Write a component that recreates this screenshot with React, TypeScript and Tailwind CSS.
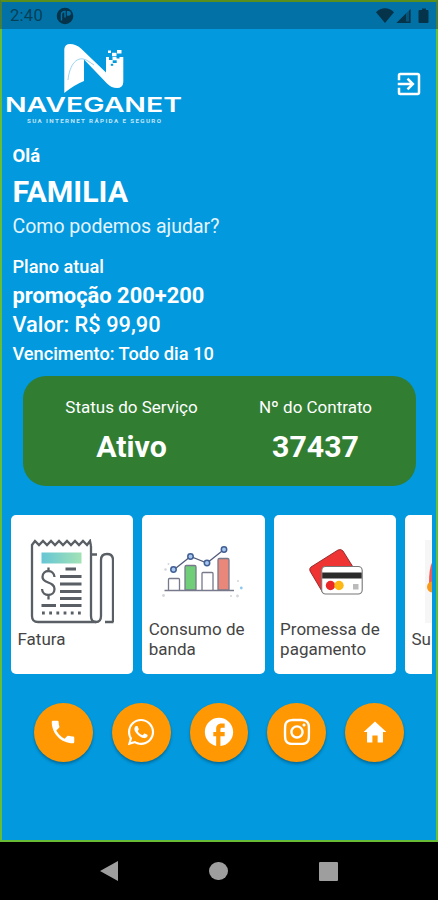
import React from 'react';
import { MdExitToApp, MdFacebook } from 'react-icons/md';
import { IoMdCall, IoMdHome } from 'react-icons/io';
import { FaWhatsapp, FaInstagram } from 'react-icons/fa';

const StatusBar: React.FC = () => (
  <div className="h-[29px] shrink-0 bg-[#0272a6] border-t-2 border-x-2 border-t-[#5a8f1e] border-x-[#467f3c] flex items-center justify-between pl-2 pr-[6px] text-[#044058]">
    <div className="flex items-center gap-[13px]">
      <span className="text-[16.5px] leading-[27px] tracking-[0.3px]">2:40</span>
      <svg width="18" height="18" viewBox="0 0 18 18">
        <circle cx="9" cy="9" r="8.3" fill="#04334a" />
        <path d="M5.5 13.500V7.5Q5.5 4.5 9 4.5V10.5" fill="none" stroke="#0272a6" strokeWidth="1.4" />
        <path d="M11 4h1.500a2.400 2.400 0 0 1 0 4.800H11Z" fill="#0272a6" />
      </svg>
    </div>
    <svg width="54" height="18" viewBox="0 0 54 18" fill="#04334a">
      <path d="M0 5.2C5-.2 13-.2 18 5.2L9 16Z" />
      <path d="M20.5 16 34.5 2V16Z" opacity="0.45" />
      <path d="M20.5 16 30 6.5V16Z" />
      <path d="M33 4 34.5 2V16H30V14.5H33Z" />
      <path d="M43.5 3h2.5V1.5h4V3h1.5q1 0 1 1V15q0 1-1 1h-8q-1 0-1-1V4q0-1 1-1Z" />
    </svg>
  </div>
);

const Logo: React.FC = () => (
  <svg width="180" height="86" viewBox="4 40 180 86" fill="#fff">
    <path d="M64.3 93V49Q65 44 70 44Q76 44 81 48.5L106 72.500V57H123.300V82Q123 88 117 88Q111.500 88 107 83.500L84 59.500V81Q74 85 64.300 93Z" />
    <path d="M68 80C69.500 65 77 54 88 61L94 65" fill="none" stroke="#8ccdf0" strokeWidth="0.9" />
    <rect x="108" y="50.500" width="3" height="2.500" />
    <rect x="112" y="52.800" width="4.500" height="3.500" />
    <rect x="117" y="50" width="4.500" height="3.500" />
    <rect x="109" y="57" width="3.500" height="3" fill="#0299de" />
    <rect x="116.500" y="56.500" width="3" height="2" fill="#0299de" />
    <rect x="112.700" y="60.300" width="4" height="2.700" fill="#0299de" />
    <rect x="110.800" y="63.800" width="2.400" height="2" fill="#0299de" />
    <text x="5" y="112" fontSize="20.5" fontWeight="600" textLength="177" lengthAdjust="spacingAndGlyphs" className="font-[Inter,sans-serif]">
      NAVEGANET
    </text>
    <text x="27" y="123" fontSize="6.2" fontWeight="700" textLength="134" lengthAdjust="spacing" fill="#c5e6f7">
      SUA INTERNET RÁPIDA E SEGURO
    </text>
  </svg>
);

const InvoiceIcon: React.FC = () => (
  <svg width="84" height="86" viewBox="30 539 84 86" fill="none" stroke="#595f64" strokeWidth="2.3">
    <path d="M91 546V616Q91 622 96 622Q101 622 101 616V560Q101 554 107 554Q113 554 113 560V622M105 622H113.5M92 554.5H97" />
    <path d="M96 622H38Q32 622 32 616V545L35 541L39 545L43 541L47 545L51 541L55 545L59 541L63 545L67 541L71 545L75 541L79 545L83 541L87 545L90 541L91 546" />
    <defs>
      <linearGradient id="invoiceBand">
        <stop offset="0" stopColor="#65c6d4" />
        <stop offset="1" stopColor="#a3e2b5" />
      </linearGradient>
    </defs>
    <rect x="41.5" y="552.5" width="40" height="11" fill="url(#invoiceBand)" stroke="none" />
    <path d="M54.5 577C54 569 42.5 569 42.5 577C42.5 584 54.5 581 54.5 589C54.5 597 42.5 597 42 589M48.5 567.5V571M48.5 595V599.5" />
    <path d="M65.5 569H76M60 576.5H81.5M60 584H81.5M60 591.5H81.5M60 598.5H81.5M60 605.5H81.5M41.5 605.5H56" strokeWidth="2.8" />
    <path d="M42 613H82" strokeWidth="2.8" strokeDasharray="2.8 4.4" />
  </svg>
);

const UsageIcon: React.FC = () => (
  <svg width="82" height="56" viewBox="163 543 82 56" fill="none" stroke="#77798c" strokeWidth="1.3">
    <path d="M165.5 590.5H235" />
    <path d="M169.5 590V579.5q0-1 1-1h9q1 0 1 1V590" />
    <path d="M186 590V567q0-1.5 1.5-1.5h8q1.5 0 1.5 1.5V590Z" fill="#70cd78" />
    <path d="M203 590V573.5q0-1 1-1h9q1 0 1 1V590" />
    <path d="M219 590V560q0-1.5 1.5-1.5h8q1.5 0 1.5 1.5V590Z" fill="#e9887a" />
    <path d="M174.5 570 191.5 556.5 208 563 225 549.5" stroke="#535b79" />
    <g fill="#a6c5ef" stroke="#405e94" strokeWidth="1.5">
      <circle cx="174.5" cy="569.5" r="2.7" />
      <circle cx="191.5" cy="556.5" r="2.7" />
      <circle cx="208" cy="563" r="2.7" />
      <circle cx="225" cy="549.5" r="2.7" />
    </g>
    <g stroke="none" fill="#d3d5da">
      <circle cx="166.5" cy="569.5" r="1.3" />
      <circle cx="169.5" cy="564" r="1" />
      <circle cx="164.5" cy="595.5" r="1.4" />
      <circle cx="232" cy="596" r="1" />
      <circle cx="238.5" cy="596" r="1.4" />
      <circle cx="239" cy="581" r="1" />
      <circle cx="242.3" cy="588" r="1.4" fill="#8dc8ef" />
    </g>
  </svg>
);

const CardsIcon: React.FC = () => (
  <svg width="56" height="48" viewBox="307 548 56 48">
    <path d="M310 567 337 550Q340 548.5 342 551L352 567V577L322 593L309 571Q308 568.5 310 567Z" fill="#ef3434" stroke="#8c2527" strokeWidth="0.9" />
    <rect x="320.7" y="566.5" width="40.5" height="27.5" rx="4" fill="#fff" stroke="#777" strokeWidth="1.1" />
    <rect x="321.2" y="572.5" width="39.5" height="6" fill="#2b2b2b" />
    <circle cx="329.5" cy="585.5" r="4.7" fill="#eb2727" />
    <circle cx="338" cy="585.5" r="4.7" fill="#fdb813" />
    <rect x="352" y="584" width="5.5" height="5.5" fill="#bbb" />
  </svg>
);

const SupportIcon: React.FC = () => (
  <svg width="40" height="86" viewBox="425 539 40 86">
    <rect x="425" y="540" width="40" height="83" fill="#f6f6f6" />
    <path d="M433 561Q429 566 429 584H440V556Z" fill="#ef5b5b" />
    <circle cx="432.5" cy="587" r="5.5" fill="#f79a1c" />
  </svg>
);

const services = [
  { label: 'Fatura', icon: <InvoiceIcon />, box: 'pt-6 pl-[19px] h-[115px]' },
  { label: 'Consumo de banda', icon: <UsageIcon />, box: 'pt-7 pl-[20px] h-[105px]' },
  { label: 'Promessa de pagamento', icon: <CardsIcon />, box: 'pt-[33px] pl-[34px] h-[105px]' },
  { label: 'Su', icon: <SupportIcon />, box: 'pt-6 pl-[20px] h-[115px]' },
];

const contacts = [
  { name: 'Telefone', icon: <IoMdCall size={30} /> },
  { name: 'WhatsApp', icon: <FaWhatsapp size={30} /> },
  { name: 'Facebook', icon: <MdFacebook size={34} /> },
  { name: 'Instagram', icon: <FaInstagram size={30} /> },
  { name: 'Início', icon: <IoMdHome size={28} /> },
];

const App: React.FC = () => {
  return (
    <div className="w-[438px] h-[900px] bg-black flex flex-col overflow-hidden font-[Roboto,sans-serif] text-white">
      <StatusBar />

      <main className="h-[813px] shrink-0 bg-[#0299de] border-x-2 border-b-2 border-[#67bd36] flex flex-col">
        <header className="h-[115px] shrink-0 flex items-start justify-between pl-[2px] pr-[12px] pt-[11px]">
          <Logo />
          <button className="mt-[29px]" aria-label="Sair">
            <MdExitToApp size={30} />
          </button>
        </header>

        <section className="pl-[10.5px] h-[232px] shrink-0">
          <p className="text-[18.5px] leading-[24px] font-bold">Olá</p>
          <h1 className="text-[30.3px] leading-[47px] font-bold">FAMILIA</h1>
          <p className="text-[19.5px] leading-[24px] text-[#e4f4fd]">Como podemos ajudar?</p>
          <p className="mt-[16px] text-[18.2px] leading-[24px] font-medium">Plano atual</p>
          <p className="mt-[3px] text-[21.9px] leading-[28px] font-bold">promoção 200+200</p>
          <p className="mt-[1px] text-[21.8px] leading-[28px] font-medium">Valor: R$ 99,90</p>
          <p className="mt-[3px] text-[18.2px] leading-[24px] font-medium">Vencimento: Todo dia 10</p>
        </section>

        <section className="ml-[20.5px] w-[393.5px] h-[110px] shrink-0 rounded-[23px] bg-[#317d32] grid grid-cols-[218px_150px] pt-[19px] text-center">
          <div>
            <p className="text-[17px] leading-[24px]">Status do Serviço</p>
            <p className="mt-[8px] text-[30.3px] leading-[40px] font-bold">Ativo</p>
          </div>
          <div>
            <p className="text-[17px] leading-[24px]">Nº do Contrato</p>
            <p className="mt-[8px] text-[30.3px] leading-[40px] font-bold">37437</p>
          </div>
        </section>

        <section className="mt-[29px] ml-[9px] mr-[4px] flex gap-[9px] overflow-hidden shrink-0">
          {services.map((s) => (
            <div key={s.label} className="w-[122.3px] h-[159px] shrink-0 rounded-[5px] bg-white text-[#444]">
              <div className={s.box}>{s.icon}</div>
              <p className="pl-[6.5px] text-[17px] leading-[19.5px]">{s.label}</p>
            </div>
          ))}
        </section>

        <nav className="mt-[29px] ml-[32px] flex gap-[19px]">
          {contacts.map((c) => (
            <button
              key={c.name}
              aria-label={c.name}
              className="w-[58.8px] h-[58.8px] rounded-full bg-[#ff9803] flex items-center justify-center shadow-[0_2px_3px_rgba(0,0,0,0.3)]"
            >
              {c.icon}
            </button>
          ))}
        </nav>
      </main>

      <footer className="h-[58px] shrink-0 flex items-center justify-center gap-[91px]">
        <svg width="18" height="20" viewBox="0 0 18 20">
          <path d="M0 10 18 0V20Z" fill="#9e9e9e" />
        </svg>
        <div className="size-[18.5px] rounded-full bg-[#9e9e9e]" />
        <div className="size-[19px] rounded-[1px] bg-[#9e9e9e]" />
      </footer>
    </div>
  );
};

export default App;
